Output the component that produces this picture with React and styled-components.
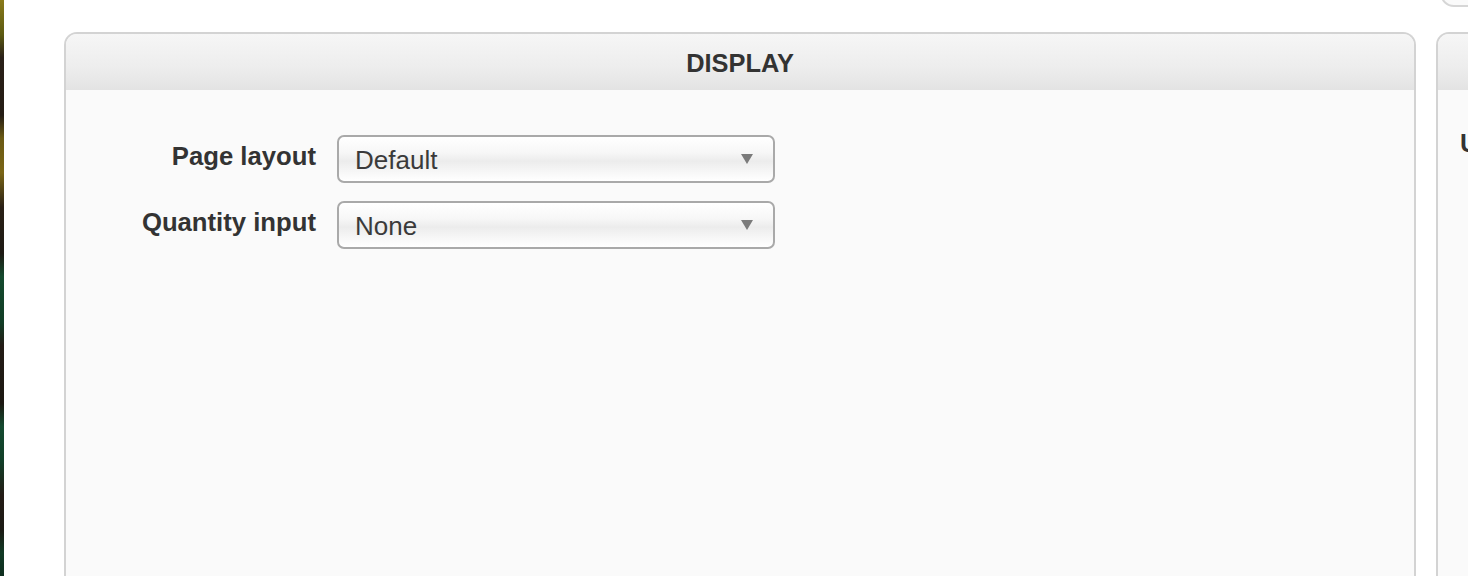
import React from "react";
import styled, { createGlobalStyle } from "styled-components";

const Global = createGlobalStyle`
  html, body { margin: 0; padding: 0; overflow: hidden; background: #ffffff; }
  body { font-family: "Liberation Sans", Arial, sans-serif; color: #333; }
  * { box-sizing: border-box; }
`;

const Page = styled.div`
  display: flex;
  width: 1468px;
  height: 576px;
  overflow: hidden;
  background: #fff;
`;

const Strip = styled.div`
  flex: 0 0 4px;
  background: linear-gradient(
    180deg,
    #8a7a1a 0%, #5c5a12 6%, #2a2018 10%, #241c14 20%, #6b5a14 24%, #7a6516 30%,
    #2a2016 36%, #1e1a14 44%, #144a2e 48%, #113d26 56%, #241c16 60%, #1c1812 70%,
    #144a30 74%, #113f28 80%, #241c16 86%, #1b1a14 92%, #113a25 96%, #0f2e1f 100%
  );
`;

const Main = styled.div`
  flex: 1;
  display: flex;
  flex-direction: column;
  padding-left: 60px;
  min-width: 0;
`;

const TopBar = styled.div`
  height: 32px;
  display: flex;
  justify-content: flex-end;
  align-items: flex-start;
  margin-right: -40px;
`;

const TopButton = styled.div`
  width: 68px;
  height: 40px;
  margin-top: -33px;
  border: 2px solid #d6d6d6;
  border-radius: 14px;
  background: #fafafa;
`;

const Panels = styled.div`
  display: flex;
  gap: 20px;
  align-items: stretch;
  flex: 1;
`;

const Panel = styled.section`
  flex: 0 0 ${(p) => p.$width}px;
  border: 2px solid #d3d3d3;
  border-bottom: none;
  border-radius: 13px 13px 0 0;
  background: #fafafa;
  overflow: hidden;
  display: flex;
  flex-direction: column;
`;

const PanelHeader = styled.header`
  height: 56px;
  display: flex;
  align-items: center;
  justify-content: center;
  background: linear-gradient(180deg, #f6f6f6 0%, #ededed 60%, #e3e3e3 100%);
  font-weight: 700;
  font-size: 25.4px;
  color: #333;
  padding-top: 2px;
`;

const Form = styled.div`
  display: grid;
  grid-template-columns: ${(p) => p.$columns};
  column-gap: 21px;
  row-gap: 18px;
  padding-top: 45px;
  padding-left: ${(p) => p.$indent || 0}px;
  align-items: center;
`;

const Label = styled.label`
  text-align: ${(p) => (p.$left ? "left" : "right")};
  font-weight: 700;
  font-size: 25.7px;
  color: #333;
  white-space: nowrap;
  margin-top: -6px;
`;

const Select = styled.div`
  height: 48px;
  border: 2px solid #a9a9a9;
  border-radius: 7px;
  background: linear-gradient(180deg, #ffffff 0%, #f7f7f7 35%, #ececec 55%, #f7f7f7 80%, #ffffff 100%);
  display: flex;
  align-items: center;
  justify-content: space-between;
  padding: 2px 20px 0 16px;
  font-size: 26px;
  color: #3a3a3a;
`;

const Arrow = styled.span`
  width: 0;
  height: 0;
  border-left: 6px solid transparent;
  border-right: 6px solid transparent;
  border-top: 10px solid #7b7b7b;
  margin-top: -2px;
`;

export default function App() {
  const rows = [
    { label: "Page layout", value: "Default" },
    { label: "Quantity input", value: "None" },
  ];
  return (
    <>
      <Global />
      <Page>
        <Strip />
        <Main>
          <TopBar>
            <TopButton />
          </TopBar>
          <Panels>
            <Panel $width={1352}>
              <PanelHeader>DISPLAY</PanelHeader>
              <Form $columns="250px 438px">
                {rows.map((r) => (
                  <React.Fragment key={r.label}>
                    <Label>{r.label}</Label>
                    <Select>
                      <span>{r.value}</span>
                      <Arrow />
                    </Select>
                  </React.Fragment>
                ))}
              </Form>
            </Panel>
            <Panel $width={600}>
              <PanelHeader />
              <Form $columns="auto" $indent={22}>
                <Label $left>Use</Label>
              </Form>
            </Panel>
          </Panels>
        </Main>
      </Page>
    </>
  );
}
